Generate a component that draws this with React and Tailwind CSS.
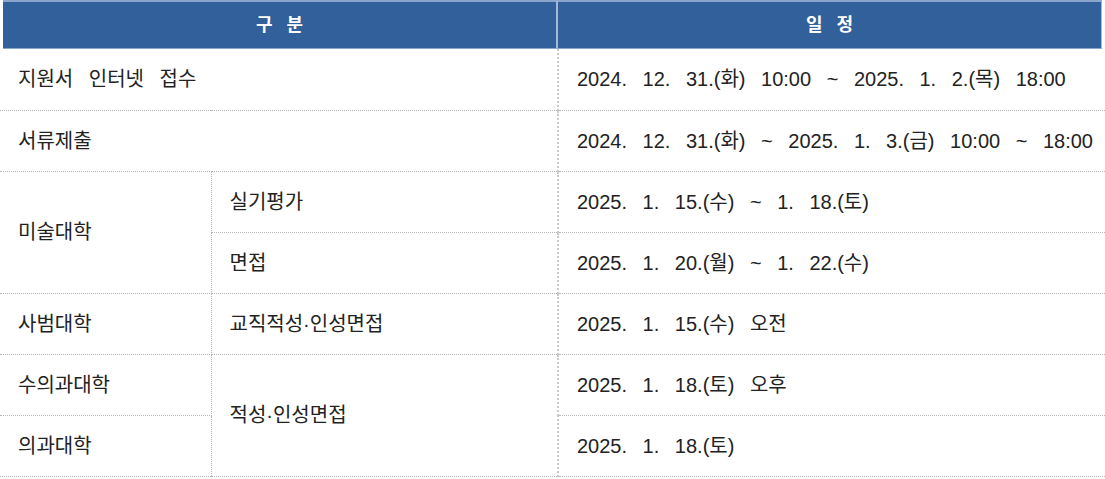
export default function App() {
  const font = { fontFamily: '"Liberation Sans", "Noto Sans CJK KR", sans-serif' };
  const td = "h-[61px] px-[18px] align-middle whitespace-nowrap text-[20px] text-[#222] border-b border-dotted border-[#b5b5b5] [word-spacing:10px]";
  const sep = "border-r-2 border-r-solid border-r-[#cacaca]";
  return (
    <div className="w-[1105px] bg-white" style={font}>
      <table className="w-full border-collapse table-fixed">
        <colgroup>
          <col className="w-[211px]" />
          <col className="w-[347px]" />
          <col />
        </colgroup>
        <thead>
          <tr className="h-[49px]">
            <th colSpan={2} className="p-0 pl-[3px]">
              <div className="h-[49px] bg-[#31609a] border-t-2 border-b border-[#8aa6cc] border-r-2 border-r-[#a3b8d6] flex items-center justify-center text-white text-[18px] font-bold [word-spacing:9px]">
                구 분
              </div>
            </th>
            <th className="p-0 pr-[3px]">
              <div className="h-[49px] bg-[#31609a] border-t-2 border-b border-[#8aa6cc] border-r border-r-[#a3b8d6] flex items-center justify-center text-white text-[18px] font-bold [word-spacing:9px]">
                일 정
              </div>
            </th>
          </tr>
        </thead>
        <tbody>
          <tr>
            <td colSpan={2} className={`${td} ${sep} [word-spacing:8px]`}>지원서 인터넷 접수</td>
            <td className={td}>2024. 12. 31.(화) 10:00 ~ 2025. 1. 2.(목) 18:00</td>
          </tr>
          <tr>
            <td colSpan={2} className={`${td} ${sep}`}>서류제출</td>
            <td className={`${td} pr-0`}>2024. 12. 31.(화) ~ 2025. 1. 3.(금) 10:00 ~ 18:00</td>
          </tr>
          <tr>
            <td rowSpan={2} className={`${td} border-r border-r-dotted`}>미술대학</td>
            <td className={`${td} ${sep}`}>실기평가</td>
            <td className={td}>2025. 1. 15.(수) ~ 1. 18.(토)</td>
          </tr>
          <tr>
            <td className={`${td} ${sep}`}>면접</td>
            <td className={td}>2025. 1. 20.(월) ~ 1. 22.(수)</td>
          </tr>
          <tr>
            <td className={`${td} border-r border-r-dotted`}>사범대학</td>
            <td className={`${td} ${sep}`}>교직적성·인성면접</td>
            <td className={td}>2025. 1. 15.(수) 오전</td>
          </tr>
          <tr>
            <td className={`${td} border-r border-r-dotted`}>수의과대학</td>
            <td rowSpan={2} className={`${td} ${sep}`}>적성·인성면접</td>
            <td className={td}>2025. 1. 18.(토) 오후</td>
          </tr>
          <tr>
            <td className={`${td} border-r border-r-dotted`}>의과대학</td>
            <td className={td}>2025. 1. 18.(토)</td>
          </tr>
        </tbody>
      </table>
    </div>
  );
}
